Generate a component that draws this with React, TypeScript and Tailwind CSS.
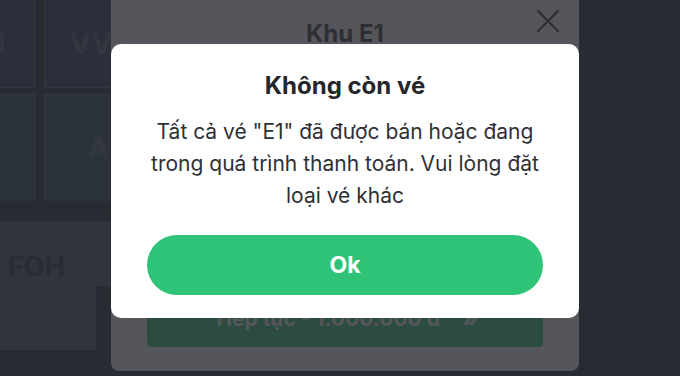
function BackgroundMap() {
  return (
    <div className="flex flex-col">
      {/* seat blocks */}
      <div className="grid grid-cols-[35px_68px] gap-x-[9px] gap-y-[6px]">
        <div className="h-[88px] bg-[#2d2e3b] border-r border-b border-[#33353f] flex items-center">
          <span className="text-[28px] font-bold text-[#34353f] -ml-[6px]">1</span>
        </div>
        <div className="h-[88px] bg-[#2d2e3b] border-l border-b border-[#33353f] flex items-center pl-[25px]">
          <span className="text-[28px] font-bold text-[#34353f] whitespace-nowrap">VVIP</span>
        </div>
        <div className="h-[107px] bg-[#2c3239] border-r border-t border-[#33373f]" />
        <div className="h-[107px] bg-[#2c3239] border-l border-t border-[#33373f] flex items-center pl-[43px]">
          <span className="text-[28px] font-bold text-[#333840]">A2</span>
        </div>
      </div>
      <div className="h-[20px]" />
      {/* FOH block */}
      <div className="w-[112px] h-[129px] bg-[#31343c] flex flex-col">
        <div className="pl-[8px] pt-[26px] h-[65px]">
          <span className="text-[27px] font-bold text-[#2a2c33]">FOH</span>
        </div>
        <div className="flex-1 flex justify-end">
          <div className="w-[16px] bg-[#292b33]" />
        </div>
      </div>
    </div>
  )
}

function TicketPanel() {
  return (
    <div className="w-[468px] h-[371px] bg-[#55565b] rounded-b-[8px] flex flex-col items-center">
      <div className="w-full relative pt-[18px] text-center leading-[32px]">
        <span className="text-[24px] font-bold text-[#2e2f35]">Khu E1</span>
        <svg
          className="absolute right-[19px] top-[9px]"
          width="24"
          height="24"
          viewBox="0 0 24 24"
          fill="none"
          stroke="#2e2f35"
          strokeWidth="2.4"
          strokeLinecap="round"
        >
          <path d="M2 2 L22 22 M22 2 L2 22" />
        </svg>
      </div>
      <div className="flex-1" />
      <div className="w-[396px] h-[56px] mb-[24px] rounded-[4px] bg-[#2d4c41] flex items-center justify-center gap-[22px] text-[#55565b] text-[21px] font-bold">
        <span>Tiếp tục - 1.000.000 đ</span>
        <span className="text-[24px]">»</span>
      </div>
    </div>
  )
}

export default function App() {
  return (
    <div
      className="w-[680px] h-[376px] bg-[#292b33] relative overflow-hidden"
      style={{ fontFamily: 'Inter, "Noto Sans", sans-serif' }}
    >
      <div className="flex">
        <BackgroundMap />
        <div className="-ml-[1px]">
          <TicketPanel />
        </div>
      </div>

      {/* alert dialog */}
      <div className="absolute left-[111px] top-[44px] w-[468px] h-[274px] bg-white rounded-[10px] flex flex-col items-center px-[36px] pt-[26px]">
        <h2 className="text-[24px] font-bold text-[#25262b] leading-[32px]">Không còn vé</h2>
        <p className="mt-[14px] text-[21px] leading-[32px] text-[#2f3036] text-center">
          Tất cả vé "E1" đã được bán hoặc đang trong quá trình thanh toán. Vui lòng đặt loại vé khác
        </p>
        <button className="mt-[23px] w-full h-[60px] rounded-full bg-[#2fc377] text-white text-[23px] font-bold">
          Ok
        </button>
      </div>
    </div>
  )
}
